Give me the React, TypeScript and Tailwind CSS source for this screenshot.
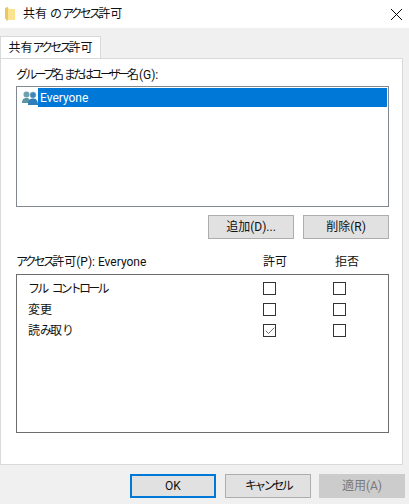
import { Check, X } from "lucide-react";
import type { ReactNode } from "react";

const font = "font-['Roboto','Noto_Sans_CJK_JP',sans-serif]";

// kana in the reference font is much narrower than in Noto CJK
function K({ children }: { children: ReactNode }) {
  return <span className="tracking-[-2.8px]">{children}</span>;
}

function FolderIcon() {
  return (
    <svg width="12" height="16" viewBox="0 0 12 16" className="block">
      <path d="M1 2 L4 1 L5 3 L11 3 L11 14 L3 14 L1 12 Z" fill="#fbe38f" />
      <path d="M1 2 L4 1 L4 14 L3 15 L1 12 Z" fill="#e8c766" />
    </svg>
  );
}

function UsersIcon() {
  return (
    <svg width="16" height="16" viewBox="0 0 16 16" className="block">
      <circle cx="4.5" cy="4.5" r="3" fill="#6fa0ad" />
      <path d="M0 13 C0 9 2 8 4.5 8 C7 8 8 9 8 13 Z" fill="#5b93a3" />
      <circle cx="11" cy="5" r="3.2" fill="#3f86b8" stroke="#ffffff" strokeWidth="0.4" />
      <path d="M6 15 C6 9.5 8.5 8.5 11 8.5 C13.5 8.5 16 9.5 16 15 Z" fill="#2f7db8" />
    </svg>
  );
}

function Box({ checked }: { checked?: boolean }) {
  return (
    <span className="flex h-[13px] w-[13px] items-center justify-center border border-[#333333] bg-white">
      {checked && <Check size={12} strokeWidth={1.7} className="shrink-0 text-[#555555]" />}
    </span>
  );
}

function Btn({ children, className }: { children: ReactNode; className: string }) {
  return (
    <button className={`flex h-[24px] w-[86px] items-center justify-center text-[12px] ${className}`}>
      {children}
    </button>
  );
}

const normalBtn = "border border-[#adadad] bg-[#e1e1e1] text-[#111111]";

export default function App() {
  return (
    <div className={`flex h-[504px] w-[409px] flex-col overflow-hidden bg-[#f0f0f0] text-[12px] text-[#111111] ${font}`}>
      <div className="flex h-[28px] items-center bg-white pl-[4px] pr-[2px]">
        <FolderIcon />
        <span className="ml-[7px] leading-none">
          共有 の<K>アクセス</K>許可
        </span>
        <X size={21} strokeWidth={1.1} className="ml-auto text-black" />
      </div>

      <div className="flex h-[30px] items-end">
        <div className="-mb-px flex h-[23px] w-[101px] items-center justify-center border border-b-0 border-[#d9d9d9] bg-white">
          <span>
            共有<K>アクセス</K>許可
          </span>
        </div>
      </div>

      <div className="flex h-[407px] w-[403px] flex-col border border-[#d9d9d9] bg-white pl-[15px] pr-[12px]">
        <div className="h-[27px] pt-[7px] leading-[18px]">
          <K>グループ</K>名<span className="tracking-[-3px]">またはユーザー</span>名(G):
        </div>

        <div className="h-[121px] w-[373px] border border-[#828790] p-px">
          <div className="flex h-[19px] items-center pl-[4px]">
            <UsersIcon />
            <span className="flex h-[19px] flex-1 items-center bg-[#0078d7] pl-[2px] text-white">Everyone</span>
          </div>
        </div>

        <div className="mt-[8px] flex w-[373px] justify-end gap-[9px]">
          <Btn className={normalBtn}>追加(D)...</Btn>
          <Btn className={normalBtn}>削除(R)</Btn>
        </div>

        <div className="mb-[4px] mt-[15px] flex h-[16px] w-[373px] items-center">
          <span className="w-[247px]">
            <K>アクセス</K>許可(P): Everyone
          </span>
          <span className="w-[24px]">許可</span>
          <span className="ml-[48px] w-[24px]">拒否</span>
        </div>

        <div className="h-[159px] w-[373px] border border-[#6d6d6d] pt-[3px]">
          <div className="flex h-[21px] items-center pl-[11px]">
            <span className="w-[235px]">
              <K>フル</K>
              <span className="ml-[5px]">
                <K>コントロール</K>
              </span>
            </span>
            <span className="w-[70px]">
              <Box />
            </span>
            <Box />
          </div>
          <div className="flex h-[21px] items-center pl-[11px]">
            <span className="w-[235px]">変更</span>
            <span className="w-[70px]">
              <Box />
            </span>
            <Box />
          </div>
          <div className="flex h-[21px] items-center pl-[11px]">
            <span className="w-[235px]">
              読<span className="tracking-[-2px]">み</span>取<span className="tracking-[-2px]">り</span>
            </span>
            <span className="w-[70px]">
              <Box checked />
            </span>
            <Box />
          </div>
        </div>
      </div>

      <div className="mt-[9px] flex justify-end gap-[8px] pr-[4px]">
        <Btn className="mr-px border-2 border-[#0078d7] bg-[#e1e1e1] text-[#111111]">OK</Btn>
        <Btn className={normalBtn}>
          <K>キャンセル</K>
        </Btn>
        <Btn className="border border-[#cccccc] bg-[#cccccc] text-[#7a7a7a]">適用(A)</Btn>
      </div>
    </div>
  );
}
